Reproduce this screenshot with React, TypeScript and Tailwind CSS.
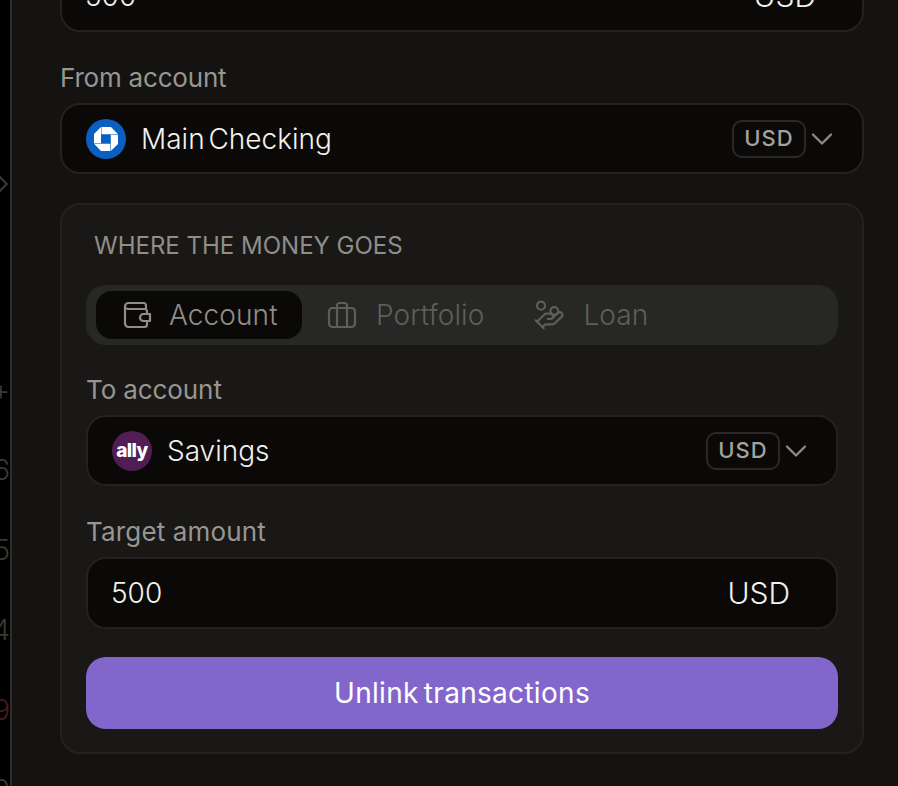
import React from 'react'
import { ChevronDown, ChevronRight, HandCoins } from 'lucide-react'

const font = { fontFamily: 'Inter, sans-serif' }

function ChaseLogo() {
  return (
    <svg width="40" height="40" viewBox="0 0 40 40" className="shrink-0">
      <circle cx="20" cy="20" r="20" fill="#0b5fc0" />
      <g fill="#ffffff">
        <polygon points="15.500,8 25,8 32,15.300 15.500,15.300" />
        <polygon points="32,15.800 32,25 24.800,32 24.800,15.800" />
        <polygon points="24.300,24.800 24.300,32 15,32 8,24.800" />
        <polygon points="8,24.300 8,15 15,8 15,24.300" />
      </g>
    </svg>
  )
}

function AllyLogo() {
  return (
    <div className="flex h-10 w-10 shrink-0 items-center justify-center rounded-full bg-[#511d55]">
      <span className="text-[19px] leading-none font-extrabold tracking-[-0.6px] text-white">ally</span>
    </div>
  )
}

function WalletIcon() {
  return (
    <svg width="30" height="30" viewBox="0 0 30 30" fill="none" stroke="currentColor" strokeWidth="2.2" strokeLinecap="round" strokeLinejoin="round">
      <path d="M24 8V5.500A2.500 2.500 0 0 0 21.500 3H6.500A3.500 3.500 0 0 0 3 6.500V23.500A3.500 3.500 0 0 0 6.500 27H22.500A2.500 2.500 0 0 0 25 24.500V21" />
      <path d="M3 7A3 3 0 0 0 6 9H22.500A2.500 2.500 0 0 1 25 11.500V14" />
      <path d="M21.500 14H28V21H21.500A3.500 3.500 0 0 1 21.500 14Z" />
    </svg>
  )
}

function CaseIcon() {
  return (
    <svg width="30" height="30" viewBox="0 0 30 30" fill="none" stroke="currentColor" strokeWidth="2.2" strokeLinecap="round" strokeLinejoin="round">
      <rect x="2" y="8" width="26" height="19" rx="3.500" />
      <path d="M10 27V5.500A2.500 2.500 0 0 1 12.500 3H17.500A2.500 2.500 0 0 1 20 5.500V27" />
    </svg>
  )
}

function UsdBadge() {
  return (
    <span className="flex h-[38px] w-[74px] items-center justify-center rounded-[10px] border-2 border-[#2a2928] text-[22px] font-medium tracking-[1px] text-[#a3a29d]">
      USD
    </span>
  )
}

function AccountSelect({ logo, name }: { logo: React.ReactNode; name: string }) {
  return (
    <div className="flex h-[71px] items-center rounded-[20px] border-2 border-[#232221] bg-[#0a0908] pr-[22px] pl-[24px]">
      {logo}
      <span className="ml-[15px] flex-1 text-[28px] font-light [word-spacing:-4px] text-[#f2f1ee]">{name}</span>
      <UsdBadge />
      <ChevronDown size={36} strokeWidth={1.6} className="-ml-[2px] text-[#8a8984]" />
    </div>
  )
}

function AmountInput({ value }: { value: string }) {
  return (
    <div className="flex h-[72px] items-center justify-between rounded-[20px] border-2 border-[#232221] bg-[#0a0908] pr-[46px] pl-[23px] font-light text-[#f2f1ee]">
      <span className="text-[28px]">{value}</span>
      <span className="text-[30px]">USD</span>
    </div>
  )
}

function Label({ children, className = '' }: { children: React.ReactNode; className?: string }) {
  return <div className={`text-[26px] leading-[32px] font-normal text-[#979691] ${className}`}>{children}</div>
}

export default function App() {
  return (
    <div style={font} className="flex h-[786px] w-[898px] overflow-hidden bg-[#141312]">
      {/* edge of the page behind the sheet */}
      <div className="flex w-[12px] shrink-0 flex-col overflow-hidden border-r-2 border-[#2e2d2c] bg-black text-[28px] font-light text-[#3a3937]">
        <div className="mt-[168px] flex h-[32px] shrink-0 items-center justify-end">
          <ChevronRight size={30} strokeWidth={1.8} className="-mr-[8px] shrink-0" />
        </div>
        <div className="mt-[174px] flex h-[32px] shrink-0 items-center justify-end leading-none">+</div>
        <div className="mt-[48px] flex h-[32px] shrink-0 items-center justify-end leading-none">6</div>
        <div className="mt-[48px] flex h-[32px] shrink-0 items-center justify-end leading-none">5</div>
        <div className="mt-[48px] flex h-[32px] shrink-0 items-center justify-end leading-none">4</div>
        <div className="mt-[48px] flex h-[32px] shrink-0 items-center justify-end leading-none text-[#4a1a24]">9</div>
        <div className="mt-[48px] flex h-[32px] shrink-0 items-center justify-end leading-none">0</div>
      </div>

      <div className="ml-[48px] -mt-[40px] w-[804px] shrink-0">
        <AmountInput value="500" />

        <div className="mt-[30px]">
          <Label className="tracking-[-0.2px]">From account</Label>
        </div>
        <div className="mt-[9px]">
          <AccountSelect logo={<ChaseLogo />} name="Main Checking" />
        </div>

        <div className="mt-[29px] rounded-[20px] border-2 border-[#232221] bg-[#191817] px-[24px] pt-[26px] pb-[23px]">
          <div className="pl-[8px] text-[24px] leading-[30px] font-normal text-[#8f8e89]">
            WHERE THE MONEY GOES
          </div>

          <div className="mt-[24px] flex h-[60px] items-center rounded-[20px] bg-[#272726] pl-[10px] text-[28px] font-light tracking-[0.1px] text-[#5f5e5a]">
            <div className="flex h-[48px] w-[206px] items-center gap-[17px] rounded-[16px] bg-[#0a0908] pl-[26px] text-[#8f8e89]">
              <WalletIcon />
              <span>Account</span>
            </div>
            <div className="ml-[25px] flex items-center gap-[19px]">
              <CaseIcon />
              <span>Portfolio</span>
            </div>
            <div className="ml-[49px] flex items-center gap-[18px]">
              <HandCoins size={32} strokeWidth={1.6} />
              <span>Loan</span>
            </div>
          </div>

          <div className="mt-[29px]">
            <Label className="tracking-[-0.1px]">To account</Label>
          </div>
          <div className="mt-[9px]">
            <AccountSelect logo={<AllyLogo />} name="Savings" />
          </div>

          <div className="mt-[30px]">
            <Label className="tracking-[0.15px]">Target amount</Label>
          </div>
          <div className="mt-[9px]">
            <AmountInput value="500" />
          </div>

          <button className="mt-[28px] flex h-[72px] w-full items-center justify-center rounded-[20px] bg-[#8366cb] text-[28px] font-normal tracking-[0.3px] [word-spacing:-3px] text-white">
            Unlink transactions
          </button>
        </div>
      </div>
    </div>
  )
}
